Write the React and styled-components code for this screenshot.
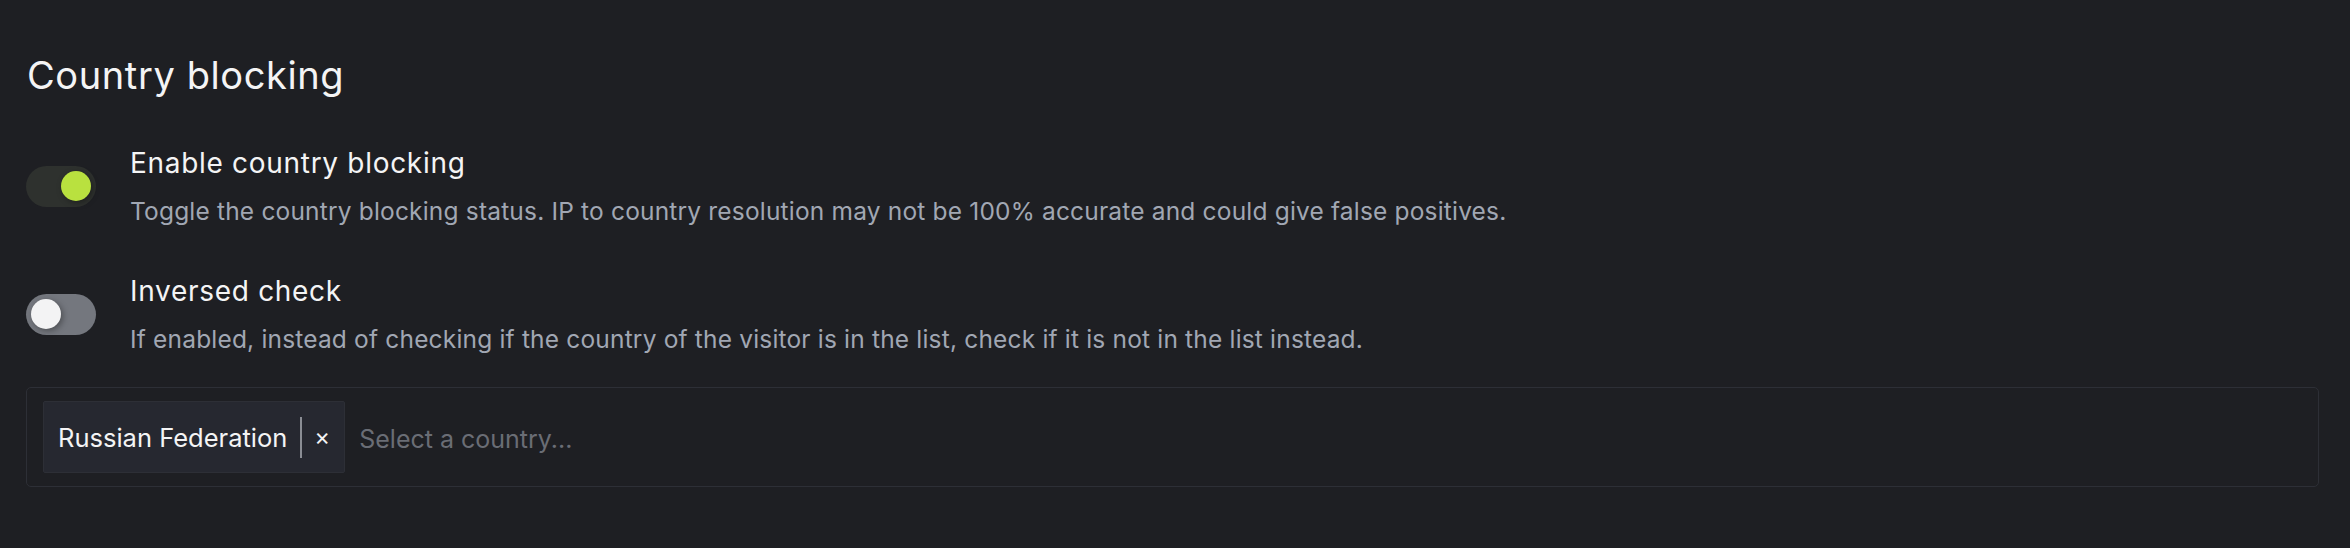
import React from 'react';
import styled, { createGlobalStyle } from 'styled-components';

const colors = {
  page: '#1e1f23',
  text: '#f4f4f5',
  muted: '#a1a7b3',
  placeholder: '#6a6d75',
  border: '#2d2f36',
  chip: '#262830',
  lime: '#b9e13f',
  trackOn: '#2e312e',
  trackOff: '#74777e',
};

const GlobalStyle = createGlobalStyle`
  html, body {
    margin: 0;
    background: ${colors.page};
  }

  body {
    font-family: Inter, "Noto Sans", sans-serif;
    color: ${colors.text};
    -webkit-font-smoothing: antialiased;
  }
`;

const Section = styled.section`
  padding: 53px 31px 40px 26px;
`;

const Title = styled.h2`
  margin: 0 0 48px 1px;
  font-size: 38px;
  line-height: 44px;
  font-weight: 400;
  letter-spacing: 0.6px;
`;

const SettingList = styled.div`
  display: flex;
  flex-direction: column;
  gap: 46px;
`;

const SettingRow = styled.label`
  display: flex;
  align-items: center;
  gap: 34px;
`;

const Track = styled.span`
  position: relative;
  flex: none;
  display: flex;
  align-items: center;
  justify-content: ${(p) => (p.$on ? 'flex-end' : 'flex-start')};
  box-sizing: border-box;
  width: 70px;
  height: 41px;
  padding: 0 5px;
  border-radius: 21px;
  background: ${(p) => (p.$on ? colors.trackOn : colors.trackOff)};
`;

const Knob = styled.span`
  width: 30px;
  height: 30px;
  border-radius: 50%;
  background: ${(p) => (p.$on ? colors.lime : '#f3f3f4')};
  box-shadow: 2px 2px 6px rgba(0, 0, 0, 0.35);
`;

const SettingText = styled.div`
  display: flex;
  flex-direction: column;
  gap: 14px;
`;

const SettingLabel = styled.span`
  font-size: 28px;
  line-height: 36px;
  letter-spacing: 0.7px;
  color: ${colors.text};
`;

const SettingHint = styled.span`
  font-size: 24.5px;
  line-height: 32px;
  letter-spacing: 0.18px;
  color: ${colors.muted};
`;

const Select = styled.div`
  display: flex;
  align-items: center;
  gap: 14px;
  margin-top: 32px;
  padding: 13px 16px;
  border: 1px solid ${colors.border};
  border-radius: 5px;
`;

const Chip = styled.div`
  display: flex;
  align-items: center;
  box-sizing: border-box;
  height: 72px;
  padding: 0 14px 0 14px;
  background: ${colors.chip};
  border: 1px solid ${colors.border};
  border-radius: 2px;
  font-size: 25.5px;
  color: ${colors.text};
`;

const ChipDivider = styled.span`
  width: 2px;
  height: 41px;
  margin: 0 12px 0 13px;
  background: #8a8d94;
`;

const ChipRemove = styled.span`
  font-size: 24px;
  line-height: 1;
  color: ${colors.text};
`;

const Placeholder = styled.span`
  margin-top: 4px;
  font-size: 25px;
  color: ${colors.placeholder};
`;

const Toggle = ({ on }) => (
  <Track $on={on}>
    <Knob $on={on} />
  </Track>
);

const settings = [
  {
    on: true,
    label: 'Enable country blocking',
    hint: 'Toggle the country blocking status. IP to country resolution may not be 100% accurate and could give false positives.',
  },
  {
    on: false,
    label: 'Inversed check',
    hint: 'If enabled, instead of checking if the country of the visitor is in the list, check if it is not in the list instead.',
  },
];

export default function App() {
  return (
    <>
      <GlobalStyle />
      <Section>
        <Title>Country blocking</Title>
        <SettingList>
          {settings.map((s) => (
            <SettingRow key={s.label}>
              <Toggle on={s.on} />
              <SettingText>
                <SettingLabel>{s.label}</SettingLabel>
                <SettingHint>{s.hint}</SettingHint>
              </SettingText>
            </SettingRow>
          ))}
        </SettingList>
        <Select>
          <Chip>
            Russian Federation
            <ChipDivider />
            <ChipRemove>×</ChipRemove>
          </Chip>
          <Placeholder>Select a country...</Placeholder>
        </Select>
      </Section>
    </>
  );
}
